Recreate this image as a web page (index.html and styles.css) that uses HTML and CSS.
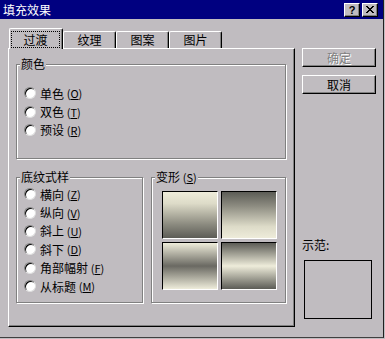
FILE: index.html
```html
<!DOCTYPE html>
<html lang="zh-CN">
<head>
    <meta charset="UTF-8">
    <meta name="viewport" content="width=device-width, initial-scale=1.0">
    <title>填充效果</title>
    <link rel="stylesheet" href="styles.css">
</head>
<body>
    <div class="dialog">
        <div class="titlebar">
            <span class="title">填充效果</span>
            <div class="caption-buttons">
                <button class="cap-btn help">?</button>
                <button class="cap-btn close">
                    <svg width="8" height="7" viewBox="0 0 8 7">
                        <path d="M0 0h2v1h1v1h2v-1h1v-1h2v1h-1v1h-1v1h-1v1h1v1h1v1h1v1h-2v-1h-1v-1h-2v1h-1v1h-2v-1h1v-1h1v-1h1v-1h-1v-1h-1v-1h-1z" fill="#000"/>
                    </svg>
                </button>
            </div>
        </div>

        <div class="dialog-body">
            <div class="main">
                <!-- Tabs -->
                <div class="tabs">
                    <div class="tab active"><span class="focus">过渡</span></div>
                    <div class="tab">纹理</div>
                    <div class="tab">图案</div>
                    <div class="tab">图片</div>
                </div>

                <div class="panel">
                    <fieldset class="group group-color">
                        <legend>颜色</legend>
                        <div class="options">
                            <label class="radio"><span class="dot"></span>单色 <span class="key">(<u>O</u>)</span></label>
                            <label class="radio"><span class="dot"></span>双色 <span class="key">(<u>T</u>)</span></label>
                            <label class="radio"><span class="dot"></span>预设 <span class="key">(<u>R</u>)</span></label>
                        </div>
                    </fieldset>

                    <div class="group-row">
                        <fieldset class="group group-style">
                            <legend>底纹式样</legend>
                            <div class="options tight">
                                <label class="radio"><span class="dot"></span>横向 <span class="key">(<u>Z</u>)</span></label>
                                <label class="radio"><span class="dot"></span>纵向 <span class="key">(<u>V</u>)</span></label>
                                <label class="radio"><span class="dot"></span>斜上 <span class="key">(<u>U</u>)</span></label>
                                <label class="radio"><span class="dot"></span>斜下 <span class="key">(<u>D</u>)</span></label>
                                <label class="radio"><span class="dot"></span>角部幅射 <span class="key">(<u>F</u>)</span></label>
                                <label class="radio"><span class="dot"></span>从标题 <span class="key">(<u>M</u>)</span></label>
                            </div>
                        </fieldset>

                        <fieldset class="group group-variant">
                            <legend>变形 <span class="key">(<u>S</u>)</span></legend>
                            <div class="variants">
                                <div class="variant v1"></div>
                                <div class="variant v2"></div>
                                <div class="variant v3"></div>
                                <div class="variant v4"></div>
                            </div>
                        </fieldset>
                    </div>
                </div>
            </div>

            <!-- Buttons and preview -->
            <div class="side">
                <button class="btn" disabled>确定</button>
                <button class="btn">取消</button>
                <div class="preview-label">示范:</div>
                <div class="preview"></div>
            </div>
        </div>
    </div>
</body>
</html>
```

FILE: styles.css
```css
* {
    margin: 0;
    padding: 0;
    box-sizing: border-box;
}

body {
    font-family: "Noto Sans CJK SC", "Noto Sans", sans-serif;
    font-size: 12px;
    color: #000;
    background: #c0bcc0;
}

.dialog {
    width: 384px;
    height: 338px;
    background: #c0bcc0;
    border-right: 1px solid #202020;
    border-bottom: 1px solid #404040;
    display: flex;
    flex-direction: column;
}

/* Title bar */
.titlebar {
    height: 19px;
    background: #000080;
    color: #fff;
    display: flex;
    align-items: center;
    justify-content: space-between;
    padding: 0 5px 0 3px;
}

.title {
    font-size: 12px;
    line-height: 19px;
}

.caption-buttons {
    display: flex;
    gap: 2px;
}

.cap-btn {
    width: 16px;
    height: 14px;
    background: #c0bcc0;
    border: 1px solid;
    border-color: #fff #000 #000 #fff;
    box-shadow: inset -1px -1px #808080;
    display: flex;
    align-items: center;
    justify-content: center;
    font: bold 11px "Liberation Sans", sans-serif;
    color: #000;
}

/* Main column */
.dialog-body {
    display: flex;
    gap: 7px;
    padding: 9px 0 0 8px;
}

.main {
    width: 287px;
}

.tabs {
    display: flex;
    align-items: flex-end;
    height: 20px;
    padding-left: 1px;
    position: relative;
    z-index: 1;
}

.tab {
    width: 53px;
    height: 17px;
    background: #c0bcc0;
    border-top: 1px solid #fff;
    border-left: 1px solid #fff;
    border-right: 1px solid #000;
    border-radius: 2px 2px 0 0;
    box-shadow: inset -1px 0 #808080;
    text-align: center;
    line-height: 15px;
}

.tab.active {
    width: 54px;
    height: 21px;
    margin-bottom: -1px;
    padding: 2px 2px 0 1px;
}

.focus {
    display: block;
    height: 17px;
    border: 1px dotted #000;
    line-height: 15px;
}

.panel {
    height: 279px;
    border-top: 1px solid #fff;
    border-left: 1px solid #fff;
    border-right: 1px solid #000;
    border-bottom: 1px solid #000;
    box-shadow: inset -1px -1px #808080;
    padding: 8px 7px 0 7px;
}

/* Group boxes */
.group {
    border: 1px solid #808080;
    box-shadow: inset 1px 1px #fff, 1px 1px #fff;
    min-width: 0;
}

.group legend {
    margin-left: 3px;
    padding: 0 1px;
    line-height: 14px;
    background: #c0bcc0;
}

.group-color {
    width: 270px;
    height: 102px;
}

.group-row {
    display: flex;
    gap: 8px;
    margin-top: 11px;
}

.group-style {
    width: 127px;
    height: 133px;
}

.group-variant {
    width: 135px;
    height: 133px;
}

.options {
    display: flex;
    flex-direction: column;
    padding: 13px 0 0 7px;
}

.options.tight {
    padding-top: 1px;
}

.radio {
    display: flex;
    align-items: center;
    height: 18.4px;
    white-space: pre;
}

.dot {
    width: 12px;
    height: 12px;
    margin-right: 4px;
    border-radius: 50%;
    background: #fff;
    border: 1px solid;
    border-color: #808080 #dfdfdf #dfdfdf #808080;
    box-shadow: inset 1px 1px #000;
}

.key {
    font-size: 11px;
}

/* Gradient variants */
.variants {
    display: grid;
    grid-template-columns: 56px 56px;
    grid-template-rows: 48px 48px;
    gap: 3px;
    margin: 7px 0 0 10px;
}

.variant {
    border: 1px solid;
    border-color: #000 #fff #fff #000;
}

.v1 {
    background: linear-gradient(#eeecda 0%, #dddbc8 25%, #8c8b80 70%, #5c5c56 100%);
}

.v2 {
    background: linear-gradient(#5c5c56 0%, #8c8b80 30%, #dddbc8 75%, #eeecda 100%);
}

.v3 {
    background: linear-gradient(#eeecda 0%, #6a6962 50%, #eeecda 100%);
}

.v4 {
    background: linear-gradient(#5c5c56 0%, #eeecda 50%, #5c5c56 100%);
}

/* Right column */
.side {
    width: 75px;
    display: flex;
    flex-direction: column;
    padding-top: 20px;
}

.btn {
    width: 74px;
    height: 19px;
    background: #c0bcc0;
    border: 1px solid;
    border-color: #fff #000 #000 #fff;
    box-shadow: inset -1px -1px #808080;
    font: 12px "Noto Sans CJK SC", sans-serif;
    color: #000;
    margin-bottom: 8px;
}

.btn:disabled {
    color: #808080;
    text-shadow: 1px 1px #fff;
}

.preview-label {
    margin-top: 136px;
    padding-left: 0;
    line-height: 14px;
}

.preview {
    width: 68px;
    height: 59px;
    margin: 8px 0 0 2px;
    border: 1px solid #000;
}
```
